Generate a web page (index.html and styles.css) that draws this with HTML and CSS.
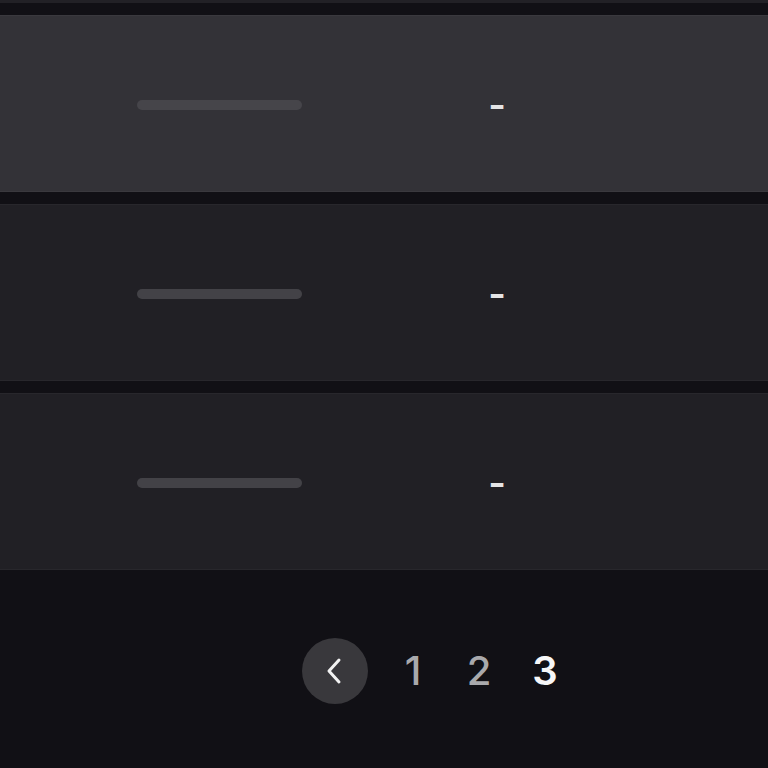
FILE: index.html
```html
<!DOCTYPE html>
<html lang="en">
<head>
<meta charset="utf-8">
<title>Results</title>
<link rel="stylesheet" href="styles.css">
</head>
<body>
  <main class="page">
    <section class="list">
      <div class="row-edge"></div>
      <div class="row row-active">
        <span class="skeleton"></span>
        <span class="value">-</span>
      </div>
      <div class="row">
        <span class="skeleton"></span>
        <span class="value">-</span>
      </div>
      <div class="row">
        <span class="skeleton"></span>
        <span class="value">-</span>
      </div>
    </section>
    <nav class="pager">
      <button class="pager-prev" aria-label="Previous page">
        <svg width="24" height="28" viewBox="0 0 24 28" fill="none">
          <polyline points="16,3 6,14 16,25" stroke="#f2f2f2" stroke-width="3" stroke-linecap="round" stroke-linejoin="round"/>
        </svg>
      </button>
      <span class="pager-num">1</span>
      <span class="pager-num">2</span>
      <span class="pager-num pager-current">3</span>
    </nav>
  </main>
</body>
</html>
```
FILE: styles.css
```css
* { box-sizing: border-box; }

html, body {
  margin: 0;
  padding: 0;
  background: #111015;
  font-family: Inter, "Noto Sans", sans-serif;
}

.page {
  width: 768px;
  height: 768px;
  display: flex;
  flex-direction: column;
  overflow: hidden;
}

.list {
  display: flex;
  flex-direction: column;
  gap: 12px;
}

.row-edge {
  height: 3px;
  background: #222126;
}

.row {
  height: 177px;
  background: #212025;
  display: grid;
  grid-template-columns: 165px 390px;
  align-items: center;
  padding-left: 137px;
  padding-top: 2px;
  border-top: 1px solid #28272c;
  border-bottom: 1px solid #28272c;
}

.row-active {
  background: #333237;
  border-color: #3a393e;
}

.skeleton {
  display: block;
  height: 10px;
  border-radius: 5px;
  background: #434247;
}

.row-active .skeleton {
  background: #46454a;
}

.value {
  text-align: center;
  color: #e4e4e6;
  font-size: 38px;
  font-weight: 600;
  line-height: 1;
}

.pager {
  flex: 1;
  display: flex;
  align-items: center;
  padding-left: 302px;
  padding-top: 4px;
}

.pager-prev {
  width: 66px;
  height: 66px;
  border-radius: 50%;
  border: none;
  background: #39383c;
  display: flex;
  align-items: center;
  justify-content: center;
  padding: 0;
  margin-right: 18px;
}

.pager-num {
  width: 54px;
  text-align: center;
  font-size: 40px;
  font-weight: 500;
  line-height: 1;
  color: #a9a9ac;
}

.pager-num + .pager-num {
  margin-left: 12px;
}

.pager-current {
  color: #f7f7f8;
  font-weight: 600;
}
```
